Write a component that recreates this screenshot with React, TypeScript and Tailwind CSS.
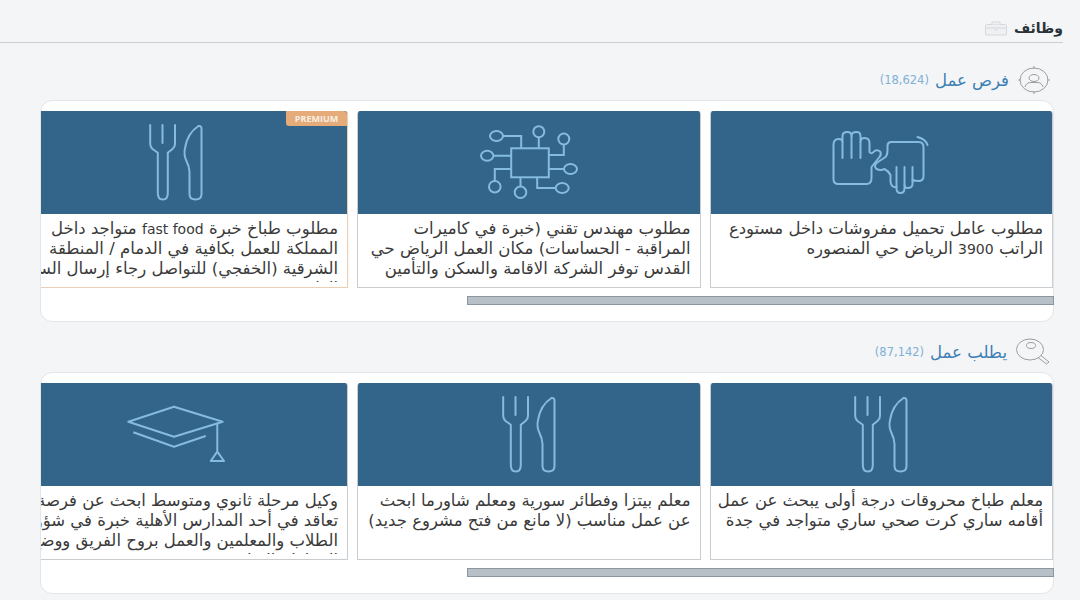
import type { ReactNode } from "react";

const iconCls = "fill-none stroke-[#85bcdd] stroke-[2]";

function HandsIcon() {
  return (
    <svg width="100" height="80" viewBox="831.5 123 100 80" className={iconCls} strokeLinejoin="round" strokeLinecap="round">
      <path d="M839 184Q834 184 834 179V145Q834 139 839 139Q843 139 843 142V136Q843 132 848 132Q852 132 852 136Q852 132 857 132Q861 132 861 136V142Q861 138 865 138Q870 138 870 143V152Q872 155 875 151Q878 149 881 152Q882 155 880 157L872 167V178Q872 184 867 184Z" />
      <path d="M843 142V158M852 136V158M861 142V158" />
      <path d="M892 142H919Q924 142 924 147V176Q924 181 919 181Q917 181 913 180V184Q913 188 908 188Q905 188 905 185V188Q905 193 901 193Q897 193 897 188V187Q892 188 891 182V175Q889 171 885 169 881 171 877 169 874 166 877 163L886 157Q888 155 888 150V146Q888 142 892 142Z" />
      <path d="M897 187V167M905 185V167M913 180V167" />
      <path d="M918 137Q926 139 928 145" />
    </svg>
  );
}

function ChipIcon() {
  return (
    <svg width="100" height="80" viewBox="478.5 123 100 80" className={iconCls}>
      <rect x="510.7" y="148.3" width="37.6" height="29" />
      <ellipse cx="496" cy="136" rx="6.5" ry="5" />
      <circle cx="538.3" cy="131.7" r="5.5" />
      <circle cx="563.3" cy="139" r="5.5" />
      <ellipse cx="570" cy="169" rx="6.5" ry="5" />
      <ellipse cx="561.7" cy="188" rx="6.5" ry="5" />
      <circle cx="520" cy="192.3" r="5.8" />
      <circle cx="494.3" cy="186.7" r="5.8" />
      <ellipse cx="486.7" cy="155.7" rx="6.2" ry="5" />
      <path d="M502.3 136H520.7V148.3M538.3 137V148.3M563.3 144.5V155H548.3M548.3 169H563.5M536.7 177.3V188H555.2M520 177.3V186.5M494.3 181V169H510.7M492.9 155.7H510.7" />
    </svg>
  );
}

function CutleryIcon() {
  return (
    <svg width="100" height="80" viewBox="126.5 123 100 80" className={iconCls} strokeLinejoin="round" strokeLinecap="round">
      <path d="M150.7 125V144Q150.7 147 153 149L158.3 152.7V193Q158.3 199.5 163.3 199.5Q168.3 199.5 168.3 193V152.7L173 149Q175.5 147 175.5 144V125" />
      <path d="M163 125V143" />
      <path d="M199 126Q202 125.5 202 129V194Q202 199.5 196 199.5Q190 199.5 190 194V172Q190 167 187 161Q184 155 185.5 148Q188 133 199 126Z" />
    </svg>
  );
}

function CapIcon() {
  return (
    <svg width="100" height="80" viewBox="126 395 100 80" className={iconCls} strokeLinejoin="round">
      <path d="M128.3 421.7L174 406.7 222.7 421.7 174 436.7Z" />
      <path d="M133.3 432.3L174 446.7 205.7 436" />
      <path d="M217.3 422.7V451.7L210.7 461H224L217.3 451.7" />
    </svg>
  );
}

function BriefcaseIcon() {
  return (
    <svg width="24" height="16" viewBox="0 0 24 16" className="fill-[#eef0f2] stroke-[#d5d9dc]">
      <rect x="1.5" y="4.5" width="21" height="10.5" rx="1" />
      <path d="M8 4.5V2H16V4.5M1.5 8H22.5M10.5 10H13.5" />
    </svg>
  );
}

function TargetIcon() {
  return (
    <svg width="32" height="28" viewBox="0 0 32 28" className="fill-none stroke-[#9a9fa3]">
      <ellipse cx="16" cy="14" rx="14" ry="12" />
      <ellipse cx="16" cy="12" rx="5" ry="3.5" />
      <path d="M7 21Q8 16.5 13 16.5H19Q24 16.5 25 21" />
      <path d="M16 0V3M16 25V28M0 14H3M29 14H32" />
    </svg>
  );
}

function SearchIcon() {
  return (
    <svg width="34" height="28" viewBox="0 0 34 28" className="fill-none stroke-[#9a9fa3]">
      <ellipse cx="14" cy="11.5" rx="13.5" ry="10.5" />
      <ellipse cx="15" cy="7.5" rx="4.5" ry="3" />
      <path d="M22 19.5L30.5 26 33 24 25 17.5" />
    </svg>
  );
}

type Job = { icon: ReactNode; text: ReactNode; id: string; premium?: boolean };

function JobCard({ icon, text, premium }: Job) {
  return (
    <div
      className={
        "relative w-[343.5px] h-[177px] shrink-0 overflow-hidden rounded-t-[3px] bg-white border-x border-b " +
        (premium ? "border-[#eccfb2] shadow-[0_1px_1px_#e0c0a0]" : "border-[#c9cdd0]")
      }
    >
      <div className="flex h-[103px] items-center justify-center bg-[#33648a]">{icon}</div>
      {premium ? (
        <span className="absolute right-0 top-0 flex h-[15px] w-[61px] items-center justify-center rounded-bl-[3px] rounded-tr-[3px] bg-[#e5ab78] text-[9px] font-bold text-[#f8efe6] font-['Open_Sans',sans-serif]">
          PREMIUM
        </span>
      ) : null}
      <p className="h-[68px] overflow-hidden pl-[3px] pr-[9px] pt-[5px] text-[16.5px] leading-[20px] text-[#3a3a3a] font-['DejaVu_Sans',sans-serif]">
        {text}
      </p>
    </div>
  );
}

function JobSection({
  icon,
  title,
  count,
  jobs,
}: {
  icon: ReactNode;
  title: string;
  count: string;
  jobs: Job[];
}) {
  return (
    <section>
      <div className="flex h-[28px] items-center gap-[9px] pr-[30px]">
        {icon}
        <span className="mt-[2px] text-[16.5px] text-[#3d7fb5] font-['DejaVu_Sans',sans-serif]">{title}</span>
        <span className="-mr-[3px] mt-[2px] text-[11.5px] text-[#82b0d6] font-['DejaVu_Sans',sans-serif]" dir="ltr">{count}</span>
      </div>
      <div className="mt-[6px] ml-[40px] mr-[26px] h-[222px] rounded-[12px] border border-[#e3e6e9] bg-white pt-[10px]">
        <div className="flex gap-[9px] overflow-hidden">
          {jobs.map((job) => (
            <JobCard key={job.id} {...job} />
          ))}
        </div>
        <div className="mt-[8px] -mr-px h-[9px] w-[587px] border border-[#8b979e] bg-[#b7c0c6]" />
      </div>
    </section>
  );
}

const latin = "text-[14px]";

const offers: Job[] = [
  { id: "a", icon: <HandsIcon />, text: <>مطلوب عامل تحميل مفروشات داخل مستودع الراتب <span className={latin}>3900</span> الرياض حي المنصوره</> },
  { id: "b", icon: <ChipIcon />, text: "مطلوب مهندس تقني (خبرة في كاميرات المراقبة - الحساسات) مكان العمل الرياض حي القدس توفر الشركة الاقامة والسكن والتأمين" },
  { id: "c", icon: <CutleryIcon />, premium: true, text: <>مطلوب طباخ خبرة <span className={latin}>fast food</span> متواجد داخل المملكة للعمل بكافية في الدمام / المنطقة الشرقية (الخفجي) للتواصل رجاء إرسال السيرة الذاتية</> },
];

const seekers: Job[] = [
  { id: "d", icon: <CutleryIcon />, text: "معلم طباخ محروقات درجة أولى يبحث عن عمل أقامه ساري كرت صحي ساري متواجد في جدة" },
  { id: "e", icon: <CutleryIcon />, text: "معلم بيتزا وفطائر سورية ومعلم شاورما ابحث عن عمل مناسب (لا مانع من فتح مشروع جديد)" },
  { id: "f", icon: <CapIcon />, text: "وكيل مرحلة ثانوي ومتوسط ابحث عن فرصة تعاقد في أحد المدارس الأهلية خبرة في شؤون الطلاب والمعلمين والعمل بروح الفريق ووضع الخطط والبرامج" },
];

export default function App() {
  return (
    <div dir="rtl" className="h-[600px] w-[1080px] overflow-hidden bg-[#f3f5f7]">
      <header className="mb-[23px] mr-[17px] flex h-[43px] items-center gap-[6px] border-b border-[#c9cdd0] pt-[14px]">
        <span className="text-[14px] font-bold text-[#2b3238] font-['DejaVu_Sans',sans-serif]">وظائف</span>
        <BriefcaseIcon />
      </header>
      <JobSection icon={<TargetIcon />} title="فرص عمل" count="(18,624)" jobs={offers} />
      <div className="h-[16px]" />
      <JobSection icon={<SearchIcon />} title="يطلب عمل" count="(87,142)" jobs={seekers} />
    </div>
  );
}
